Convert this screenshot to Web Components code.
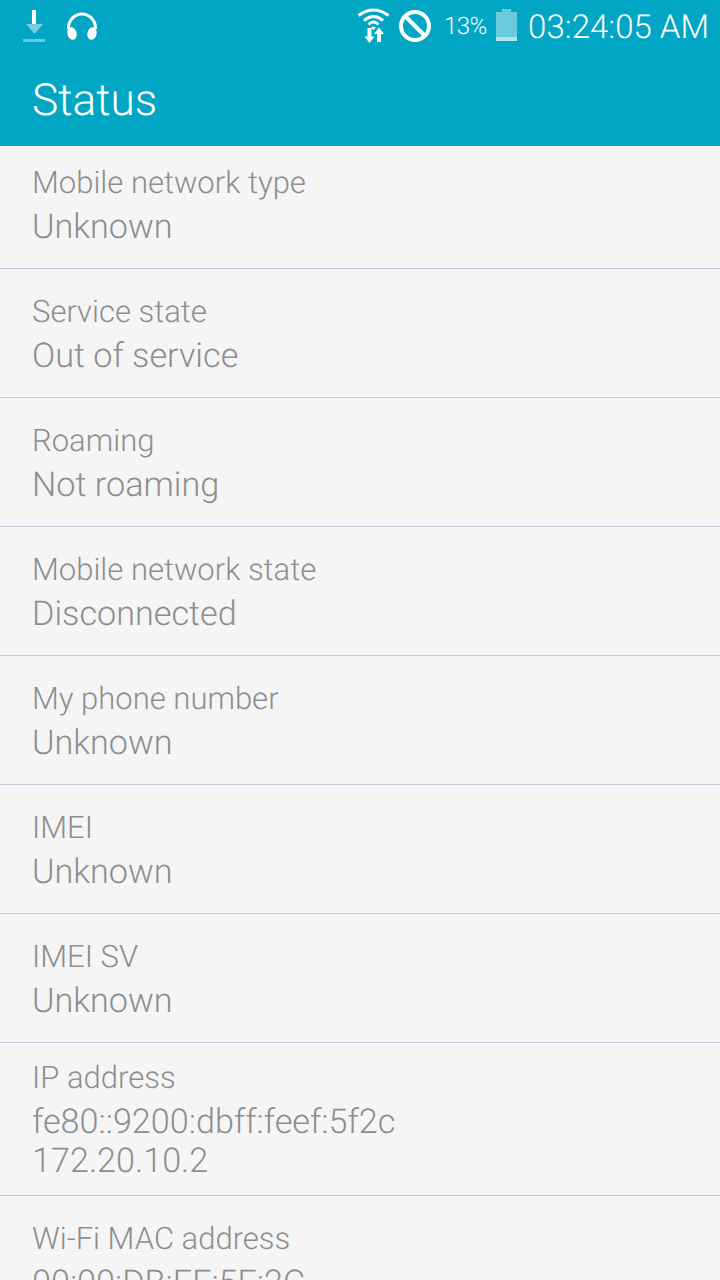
<!DOCTYPE html>
<html>
<head>
<meta charset="utf-8">
<style>
  html, body { margin: 0; padding: 0; height: 1280px; overflow: hidden; background: #f5f5f5; font-family: Roboto, sans-serif; font-weight: 300; text-rendering: geometricPrecision; }
</style>
</head>
<body>
<status-screen>
  <status-row label="Mobile network type" class="first">Unknown</status-row>
  <status-row label="Service state">Out of service</status-row>
  <status-row label="Roaming">Not roaming</status-row>
  <status-row label="Mobile network state">Disconnected</status-row>
  <status-row label="My phone number">Unknown</status-row>
  <status-row label="IMEI">Unknown</status-row>
  <status-row label="IMEI SV">Unknown</status-row>
  <status-row label="IP address" class="ip">fe80::9200:dbff:feef:5f2c<br>172.20.10.2</status-row>
  <status-row label="Wi-Fi MAC address" class="last">00:00:DB:EF:5F:2C</status-row>
</status-screen>

<script>
const StatusBarTemplate = document.createElement("template");
StatusBarTemplate.innerHTML = /*html*/ `
  <style>
    :host { display: flex; align-items: center; height: 52px; color: #fff; }
    svg { display: block; fill: #fff; flex: none; }
    #left { display: flex; align-items: center; padding-left: 23px; gap: 21px; flex: 1; }
    #right { display: flex; align-items: center; padding-right: 11px; }
    #pct { font-size: 24px; margin-left: 13px; letter-spacing: -0.6px; width: 42px; white-space: nowrap; }
    #time { font-size: 33px; margin-left: 11px; margin-top: 2px; white-space: nowrap; }
    #battery { margin-left: 10px; margin-top: -2px; }
    #block { margin-left: 9px; }
  </style>
  <div id="left">
    <svg width="22" height="32" viewBox="0 0 22 32">
      <rect x="9" y="0" width="4" height="14" />
      <path d="M3 14h17l-8.500 10z" fill-opacity=".45"/>
      <rect x="0" y="29" width="22" height="3" fill-opacity=".4"/>
    </svg>
    <svg width="32" height="28" viewBox="0 0 32 28">
      <path d="M2.500 17V16a13.500 14 0 0 1 27 0V17" fill="none" stroke="#fff" stroke-width="3"/>
      <ellipse cx="6" cy="21.500" rx="4.600" ry="6.400" transform="rotate(-12 6 21.500)"/>
      <ellipse cx="26" cy="21.500" rx="4.600" ry="6.400" transform="rotate(12 26 21.500)"/>
    </svg>
  </div>
  <div id="right">
    <svg id="wifi" width="33" height="36" viewBox="0 0 33 36">
      <path d="M1.500 7.500Q16.500 -3.500 31.500 7.500" fill="none" stroke="#fff" stroke-width="3"/>
      <path d="M7 12.500Q16.500 4.500 26 12.500" fill="none" stroke="#fff" stroke-width="3"/>
      <path d="M11.500 16.500Q16.500 11.500 21.500 16.500" fill="none" stroke="#fff" stroke-width="2.800"/>
      <path d="M14 19.500Q16.500 17.500 19 19.500L16.500 22z"/>
      <path d="M10.500 20h4v8.500h3l-5 6.500-5-6.500h3z"/>
      <path d="M22 19.500l5 6.500h-3v8h-4v-8h-3z"/>
    </svg>
    <svg id="block" width="32" height="32" viewBox="0 0 32 32">
      <circle cx="16" cy="16" r="14" fill="none" stroke="#fff" stroke-width="4"/>
      <path d="M6.500 6.500l19 19" stroke="#fff" stroke-width="4"/>
    </svg>
    <span id="pct">13%</span>
    <svg id="battery" width="21" height="32" viewBox="0 0 21 32">
      <path d="M6 0h9v3h6v25H0V3h6z" fill-opacity=".42"/>
      <rect x="0" y="28" width="21" height="4" fill-opacity=".7"/>
    </svg>
    <span id="time">03:24:05 AM</span>
  </div>
`;
class StatusBar extends HTMLElement {
  constructor() {
    super();
    this.attachShadow({ mode: "open" }).append(StatusBarTemplate.content.cloneNode(true));
  }
}
customElements.define("status-bar", StatusBar);

const AppHeaderTemplate = document.createElement("template");
AppHeaderTemplate.innerHTML = /*html*/ `
  <style>
    :host { display: block; background: #00a6c4; height: 146px; color: #fff; }
    h1 { margin: 0; padding: 21px 0 0 32px; font-size: 44.300px; font-weight: 300; line-height: 54px; }
  </style>
  <status-bar></status-bar>
  <h1><slot></slot></h1>
`;
class AppHeader extends HTMLElement {
  constructor() {
    super();
    this.attachShadow({ mode: "open" }).append(AppHeaderTemplate.content.cloneNode(true));
  }
}
customElements.define("app-header", AppHeader);

const StatusRowTemplate = document.createElement("template");
StatusRowTemplate.innerHTML = /*html*/ `
  <style>
    :host { display: block; box-sizing: border-box; height: 129px; padding: 23px 32px 0; border-bottom: 1px solid #c0ccdb; }
    :host(.first) { height: 123px; padding-top: 17px; }
    :host(.ip) { height: 153px; padding-top: 15px; }
    :host(.last) { border-bottom: 0; padding-top: 23px; }
    #label { font-size: 31px; line-height: 40px; color: #8e8e8e; white-space: nowrap; }
    #value { font-size: 34.200px; line-height: 39px; margin-top: 5px; color: #8e8e8e; white-space: nowrap; }
  </style>
  <div id="label"></div>
  <div id="value"><slot></slot></div>
`;
class StatusRow extends HTMLElement {
  constructor() {
    super();
    this.attachShadow({ mode: "open" }).append(StatusRowTemplate.content.cloneNode(true));
  }
  connectedCallback() {
    this.shadowRoot.getElementById("label").textContent = this.getAttribute("label");
  }
}
customElements.define("status-row", StatusRow);

const StatusScreenTemplate = document.createElement("template");
StatusScreenTemplate.innerHTML = /*html*/ `
  <style>
    :host { display: block; width: 720px; height: 1280px; overflow: hidden; background: #f5f5f5; }
  </style>
  <app-header>Status</app-header>
  <slot></slot>
`;
class StatusScreen extends HTMLElement {
  constructor() {
    super();
    this.attachShadow({ mode: "open" }).append(StatusScreenTemplate.content.cloneNode(true));
  }
}
customElements.define("status-screen", StatusScreen);
</script>
</body>
</html>
